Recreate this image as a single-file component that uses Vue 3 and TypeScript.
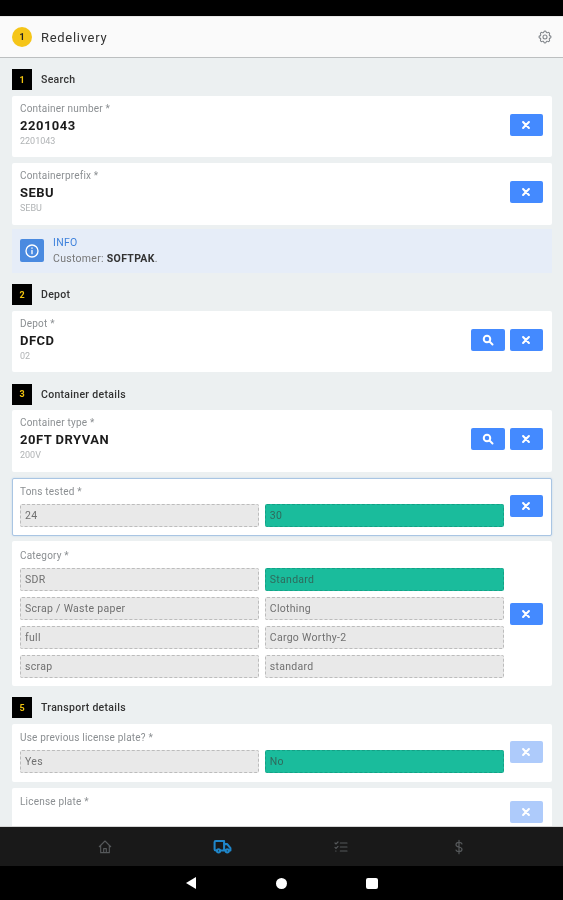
<script setup lang="ts">
interface Field {
  kind: 'text' | 'options' | 'info'
  label?: string
  value?: string
  sub?: string
  search?: boolean
  options?: string[]
  selected?: string
  focused?: boolean
  disabled?: boolean
  tight?: boolean
  snug?: boolean
  short?: boolean
  roomy?: boolean
}
interface Section {
  num: string
  title: string
  fields: Field[]
}
const sections: Section[] = [
  {
    num: '1',
    title: 'Search',
    fields: [
      { kind: 'text', label: 'Container number *', value: '2201043', sub: '2201043' },
      { kind: 'text', label: 'Containerprefix *', value: 'SEBU', sub: 'SEBU', snug: true },
      { kind: 'info' }
    ]
  },
  {
    num: '2',
    title: 'Depot',
    fields: [{ kind: 'text', label: 'Depot *', value: 'DFCD', sub: '02', search: true }]
  },
  {
    num: '3',
    title: 'Container details',
    fields: [
      { kind: 'text', label: 'Container type *', value: '20FT DRYVAN', sub: '200V', search: true },
      { kind: 'options', label: 'Tons tested *', options: ['24', '30'], selected: '30', focused: true, tight: true },
      {
        kind: 'options',
        label: 'Category *',
        options: ['SDR', 'Standard', 'Scrap / Waste paper', 'Clothing', 'full', 'Cargo Worthy-2', 'scrap', 'standard'],
        selected: 'Standard',
        roomy: true
      }
    ]
  },
  {
    num: '5',
    title: 'Transport details',
    fields: [
      { kind: 'options', label: 'Use previous license plate? *', options: ['Yes', 'No'], selected: 'No', disabled: true },
      { kind: 'text', label: 'License plate *', disabled: true, short: true }
    ]
  }
]
</script>

<template>
  <div class="screen">
    <div class="status"></div>
    <header class="topbar">
      <span class="badge">1</span>
      <span class="title">Redelivery</span>
      <svg class="gear" viewBox="0 0 24 24" fill="none" stroke="#80858a" stroke-width="1.6" stroke-linejoin="round">
        <path d="M10.325 4.317c.426-1.756 2.924-1.756 3.35 0a1.724 1.724 0 0 0 2.573 1.066c1.543-.94 3.31.826 2.37 2.37a1.724 1.724 0 0 0 1.065 2.572c1.756.426 1.756 2.924 0 3.35a1.724 1.724 0 0 0-1.066 2.573c.94 1.543-.826 3.31-2.37 2.37a1.724 1.724 0 0 0-2.572 1.065c-.426 1.756-2.924 1.756-3.35 0a1.724 1.724 0 0 0-2.573-1.066c-1.543.94-3.31-.826-2.37-2.37a1.724 1.724 0 0 0-1.065-2.572c-1.756-.426-1.756-2.924 0-3.35a1.724 1.724 0 0 0 1.066-2.573c-.94-1.543.826-3.31 2.37-2.37 1 .608 2.296.07 2.572-1.065z" />
        <circle cx="12" cy="12" r="3" />
      </svg>
    </header>

    <main class="content">
      <section v-for="s in sections" :key="s.num" class="section">
        <div class="section-head">
          <span class="square">{{ s.num }}</span>
          <span class="section-title">{{ s.title }}</span>
        </div>

        <template v-for="f in s.fields" :key="f.label ?? 'info'">
          <div v-if="f.kind === 'info'" class="info">
            <span class="info-icon">
              <svg viewBox="0 0 24 24" width="16" height="16" fill="none" stroke="#fff" stroke-width="2">
                <circle cx="12" cy="12" r="9" />
                <path d="M12 11v5M12 7.500v.5" stroke-linecap="round" />
              </svg>
            </span>
            <div class="info-text">
              <div class="info-title">INFO</div>
              <div class="info-body">Customer: <b>SOFTPAK</b>.</div>
            </div>
          </div>

          <div
            v-else
            class="card"
            :class="{ tight: f.tight, snug: f.snug, focused: f.focused, 'card-options': f.kind === 'options', short: f.short, roomy: f.roomy }"
          >
            <div class="body">
              <div class="label">{{ f.label }}</div>
              <template v-if="f.kind === 'text' && f.value">
                <div class="value">{{ f.value }}</div>
                <div class="sub">{{ f.sub }}</div>
              </template>
              <div v-if="f.kind === 'options'" class="options">
                <div v-for="o in f.options" :key="o" class="option" :class="{ selected: o === f.selected }">{{ o }}</div>
              </div>
            </div>
            <div class="actions" :class="{ disabled: f.disabled }">
              <button v-if="f.search" class="btn" type="button" aria-label="Search">
                <svg viewBox="0 0 24 24" width="12" height="12" fill="none" stroke="#fff" stroke-width="4" stroke-linecap="round">
                  <circle cx="10" cy="10" r="6.500" />
                  <path d="M15.500 15.500L21 21" />
                </svg>
              </button>
              <button class="btn" type="button" aria-label="Clear">
                <svg viewBox="0 0 24 24" width="10" height="10" fill="none" stroke="#fff" stroke-width="5" stroke-linecap="round">
                  <path d="M5 5l14 14M19 5L5 19" />
                </svg>
              </button>
            </div>
          </div>
        </template>
      </section>
    </main>

    <nav class="tabs">
      <svg viewBox="0 0 24 24" width="16" height="16" fill="none" stroke="#55585a" stroke-width="1.7" stroke-linejoin="round">
        <path d="M3 12l9-9 9 9M5.500 10v10.500h13V10M10 20.500v-6h4v6" />
      </svg>
      <svg viewBox="0 0 24 24" width="19" height="19" fill="none" stroke="#1f86c9" stroke-width="2.600" stroke-linejoin="round">
        <path d="M5 17H3.500A1.500 1.500 0 0 1 2 15.500V6.500A1.500 1.500 0 0 1 3.500 5H14v12H9M14 9h4l4 5v3h-2M14 17h2" />
        <circle cx="7" cy="17.500" r="2" />
        <circle cx="18" cy="17.500" r="2" />
      </svg>
      <svg viewBox="0 0 24 24" width="16" height="16" fill="none" stroke="#55585a" stroke-width="1.800" stroke-linecap="round">
        <path d="M11 6h10M11 12h10M11 18h10M3 6l1.500 1.500L7.500 4.500M3 12.500l1.500 1.500 3-3M4 18h.5" />
      </svg>
      <svg viewBox="0 0 24 24" width="16" height="16" fill="none" stroke="#55585a" stroke-width="1.800" stroke-linecap="round">
        <path d="M16.500 7.500C16 5.500 14 5 12 5S7.500 6 7.500 8.500 10 11.500 12 12s4.500 1.300 4.500 3.500S14 19 12 19s-4-.6-4.500-2.500M12 2v20" />
      </svg>
    </nav>

    <footer class="android">
      <svg viewBox="0 0 12 12" width="12" height="12"><path d="M11 0v12L1 6z" fill="#fff" /></svg>
      <span class="dot"></span>
      <span class="stop"></span>
    </footer>
  </div>
</template>

<style scoped>
.screen {
  width: 563px;
  height: 900px;
  display: flex;
  flex-direction: column;
  overflow: hidden;
  background: #ecf0f1;
  font-family: Roboto, 'Liberation Sans', sans-serif;
  color: #222;
  filter: blur(0.45px);
}
.status {
  height: 16px;
  background: #000;
  flex: none;
}
.topbar {
  height: 40px;
  flex: none;
  display: flex;
  align-items: center;
  padding: 0 10px 0 12px;
  background: #fafafa;
  border-top: 1px solid #e8e8e8;
  border-bottom: 1px solid #bcbfc0;
  box-sizing: content-box;
}
.badge {
  width: 20px;
  height: 20px;
  border-radius: 50%;
  background: #f5c518;
  color: #222;
  font-size: 9px;
  font-weight: 700;
  display: flex;
  align-items: center;
  justify-content: center;
}
.title {
  margin-left: 9px;
  font-size: 13px;
  letter-spacing: 0.7px;
  color: #333;
  flex: 1;
}
.gear {
  width: 16px;
  height: 16px;
}
.content {
  flex: 1;
  min-height: 0;
  overflow: hidden;
  padding: 10.500px 11px 0 12px;
}
.section {
  padding-bottom: 5px;
}
.section-head {
  height: 22px;
  display: flex;
  align-items: center;
  margin-bottom: 5px;
}
.square {
  width: 20px;
  height: 21px;
  background: #000;
  color: #f1c40f;
  font-size: 9px;
  font-weight: 700;
  display: flex;
  align-items: center;
  justify-content: center;
}
.section-title {
  margin-left: 9px;
  font-size: 10.500px;
  font-weight: 500;
  letter-spacing: 0.3px;
  color: #333;
}
.card {
  background: #fff;
  border-radius: 2px;
  display: flex;
  align-items: center;
  padding: 7px 9px 10.500px 8px;
  margin-bottom: 6px;
  box-sizing: border-box;
}
.card.tight {
  margin-bottom: 5px;
}
.card.snug {
  margin-bottom: 4px;
}
.card.card-options {
  padding-top: 8px;
  padding-bottom: 9px;
}
.card.card-options.roomy {
  padding-top: 9px;
  padding-bottom: 8px;
}
.card.focused {
  border: 1px solid #a9c5e3;
  box-shadow: 0 0 2px #bcd3ec;
  padding: 7px 8px 8px 7px;
}
.card.short {
  height: 48px;
  padding-top: 8px;
  align-items: flex-start;
}
.body {
  flex: 1;
  min-width: 0;
}
.label {
  font-size: 10px;
  line-height: 12px;
  color: #8b8f92;
  letter-spacing: 0.2px;
}
.value {
  margin-top: 2px;
  font-size: 13px;
  line-height: 17px;
  font-weight: 700;
  letter-spacing: 0.5px;
  color: #1c1c1c;
}
.sub {
  margin-top: 2px;
  font-size: 9px;
  line-height: 11px;
  color: #b0b3b5;
}
.options {
  margin-top: 6px;
  display: grid;
  grid-template-columns: 1fr 1fr;
  gap: 6px;
}
.option {
  height: 23px;
  box-sizing: border-box;
  border: 1px dashed #bcbcbc;
  border-radius: 2px;
  background: #e9e9e9;
  padding: 0 4px;
  display: flex;
  align-items: center;
  font-size: 10.500px;
  letter-spacing: 0.3px;
  color: #707070;
}
.option.selected {
  background: #1abc9c;
  border-color: #14a085;
  color: #2f6a5c;
}
.actions {
  flex: none;
  margin-left: 6px;
  display: flex;
  gap: 5px;
}
.card.short .actions {
  margin-top: 5px;
}
.btn {
  width: 33.500px;
  height: 22px;
  padding: 0;
  border: none;
  border-radius: 2px;
  background: #448aff;
  display: flex;
  align-items: center;
  justify-content: center;
}
.actions.disabled .btn {
  background: #aecbfb;
}
.info {
  height: 44px;
  background: #e6edf8;
  display: flex;
  align-items: center;
  padding-left: 8px;
  margin-bottom: 6px;
}
.info-icon {
  width: 24px;
  height: 23px;
  border-radius: 2px;
  background: #4a8ae0;
  display: flex;
  align-items: center;
  justify-content: center;
  flex: none;
}
.info-text {
  margin-left: 9px;
  font-size: 10.500px;
  line-height: 16px;
  letter-spacing: 0.3px;
}
.info-title {
  color: #3f82dc;
}
.info-body {
  color: #777;
}
.info-body b {
  color: #333;
  font-weight: 700;
}
.tabs {
  height: 39px;
  flex: none;
  background: #191919;
  border-top: 1px solid #d5d5d5;
  display: grid;
  grid-template-columns: repeat(4, 118px);
  justify-content: center;
  justify-items: center;
  align-items: center;
}
.android {
  height: 34px;
  flex: none;
  background: #000;
  display: grid;
  grid-template-columns: repeat(3, 90.500px);
  justify-content: center;
  justify-items: center;
  align-items: center;
}
.dot {
  width: 11px;
  height: 11px;
  border-radius: 50%;
  background: #fff;
}
.stop {
  width: 12px;
  height: 11px;
  border-radius: 2px;
  background: #fff;
}
</style>

<style>
html,
body {
  margin: 0;
  background: #000;
}
</style>
